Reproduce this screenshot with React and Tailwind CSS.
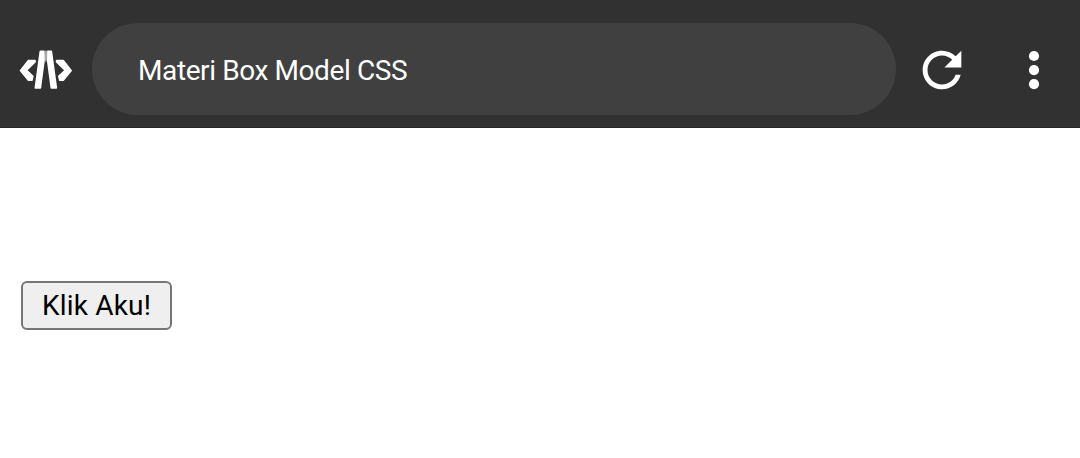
function CodeIcon() {
  return (
    <svg className="h-[60px] w-[72px] shrink-0" viewBox="0 0 216 180" fill="#fff" stroke="#fff" strokeLinejoin="round" aria-hidden="true">
      <path strokeWidth="4" d="M55 61H75L76 65L50 91L69 109L66 121H55L31 92Z" />
      <path strokeWidth="4" d="M160 61H140L139 65L165 91L146 109L149 121H160L184 92Z" />
      <path strokeWidth="5" d="M91 34H102L103 54L91 144H76Z" />
      <path strokeWidth="5" d="M124 34H113L112 54L124 144H139Z" />
      <path stroke="none" fill="#a8a8a8" d="M103 32H112L111 58L107.500 68L104 58Z" />
    </svg>
  );
}

function RefreshIcon() {
  return (
    <svg className="size-[58px] shrink-0" viewBox="0 0 24 24" fill="#fff" aria-hidden="true">
      <path d="M17.65 6.35C16.2 4.9 14.21 4 12 4c-4.42 0-7.99 3.58-7.99 8s3.57 8 7.99 8c3.73 0 6.84-2.55 7.73-6h-2.08c-.82 2.33-3.04 4-5.65 4-3.31 0-6-2.69-6-6s2.69-6 6-6c1.66 0 3.14.69 4.22 1.78L13 11h7V4l-2.35 2.35z" />
    </svg>
  );
}

function MoreIcon() {
  return (
    <svg className="h-[60px] w-5 shrink-0" viewBox="0 0 20 60" fill="#fff" aria-hidden="true">
      <circle cx="10" cy="16" r="5.1" />
      <circle cx="10" cy="30.1" r="5.1" />
      <circle cx="10" cy="44.1" r="5.1" />
    </svg>
  );
}

export default function App() {
  return (
    <div className="h-[458px] w-full overflow-hidden bg-white font-['Roboto',sans-serif]">
      <header className="flex h-32 items-start border-b border-[#2a2829] bg-[#313131] pl-2.5">
        <div className="pt-10">
          <CodeIcon />
        </div>
        <div className="mt-[23px] ml-2.5 flex h-[92px] w-[804px] items-center rounded-full bg-[#404040] pl-[46px]">
          <span className="pt-[3px] text-[28px] leading-8 tracking-[-0.4px] whitespace-nowrap text-white">Materi Box Model CSS</span>
        </div>
        <div className="ml-[17px] pt-[41px]">
          <RefreshIcon />
        </div>
        <button type="button" className="mt-10 ml-[53px]" aria-label="Menu">
          <MoreIcon />
        </button>
      </header>
      <main className="pt-[153px] pl-[21px]">
        <button type="button" className="flex h-[49px] w-[151px] items-center justify-center rounded-[6px] border-2 border-[#767676] bg-[#efefef] text-[28px] leading-8 tracking-[0.2px] whitespace-nowrap text-black">
          Klik Aku!
        </button>
      </main>
    </div>
  );
}
